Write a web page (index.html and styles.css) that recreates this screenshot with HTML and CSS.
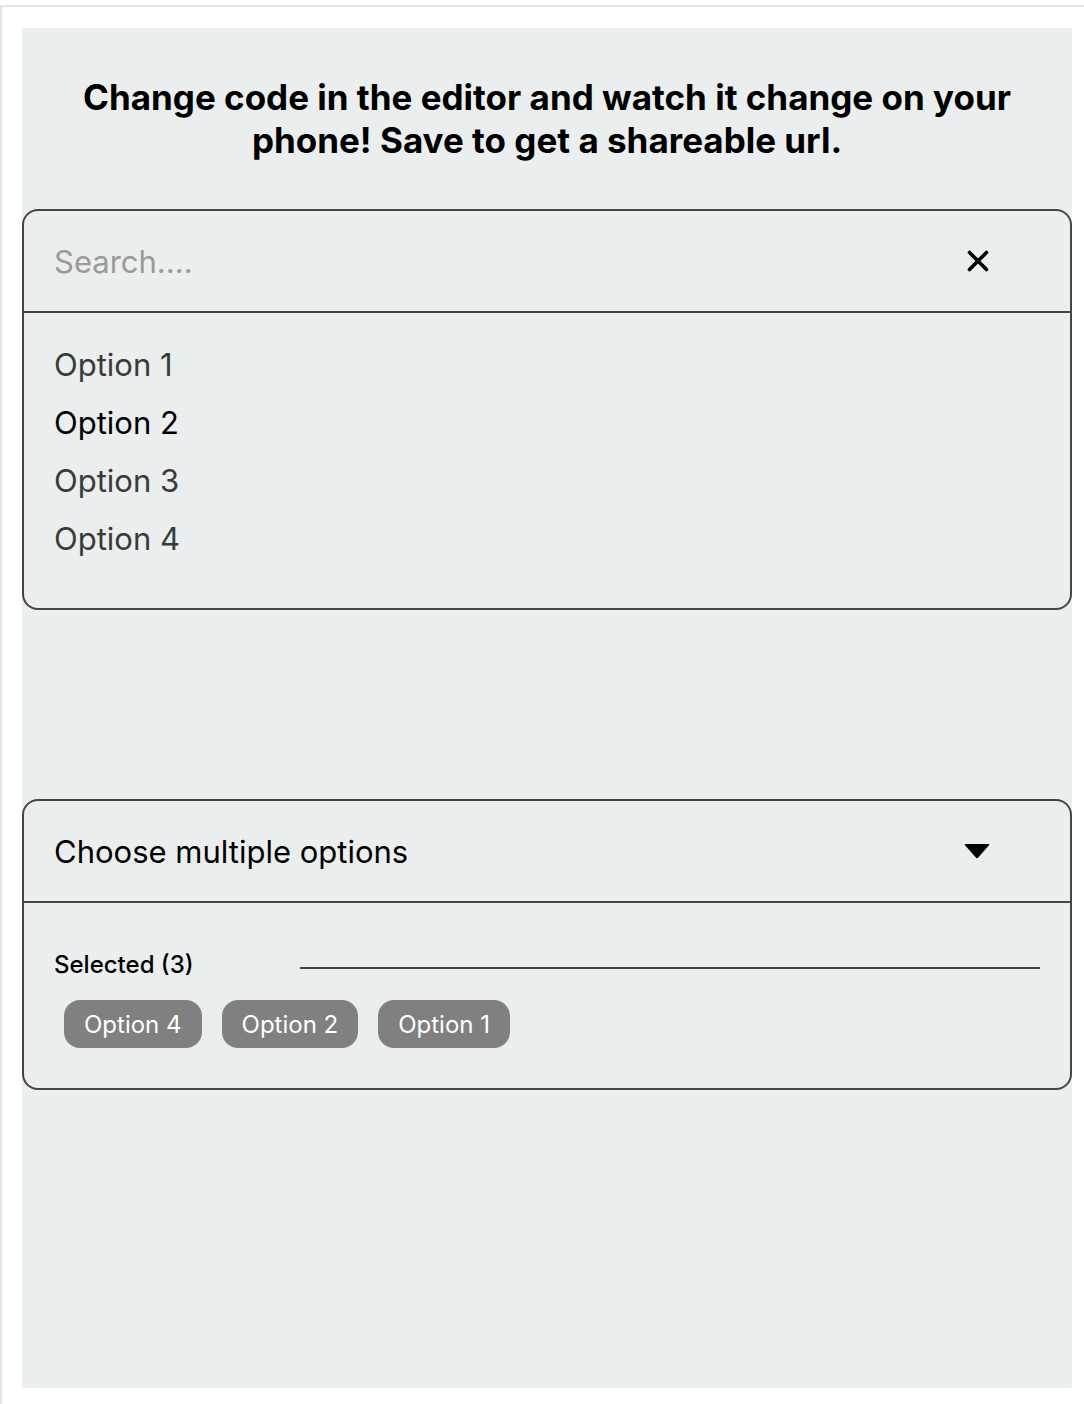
FILE: index.html
```html
<!DOCTYPE html>
<html lang="en">
<head>
<meta charset="utf-8">
<title>Select demo</title>
<link rel="stylesheet" href="styles.css">
</head>
<body>
<div class="frame">
  <div class="shell">
    <main class="panel">
      <h1 class="intro">Change code in the editor and watch it change on your phone! Save to get a shareable url.</h1>

      <section class="card search-card">
        <div class="card-head">
          <span class="placeholder">Search....</span>
          <svg class="icon-x" width="24" height="24" viewBox="0 0 24 24" aria-hidden="true">
            <path d="M3.5 3.5 L20.5 20.5 M20.5 3.5 L3.5 20.5" stroke="#000" stroke-width="3.6" stroke-linecap="round" fill="none"/>
          </svg>
        </div>
        <ul class="options">
          <li class="option">Option 1</li>
          <li class="option active">Option 2</li>
          <li class="option">Option 3</li>
          <li class="option">Option 4</li>
        </ul>
      </section>

      <section class="card multi-card">
        <div class="card-head">
          <span class="title">Choose multiple options</span>
          <svg class="icon-caret" width="28" height="18" viewBox="0 0 28 18" aria-hidden="true">
            <path d="M2.5 2 L25.5 2 Q27 2 26 3.2 L15.2 15.6 Q14 17 12.8 15.6 L2 3.2 Q1 2 2.5 2 Z" fill="#000"/>
          </svg>
        </div>
        <div class="selected">
          <div class="selected-row">
            <span class="selected-label">Selected (3)</span>
            <span class="selected-rule"></span>
          </div>
          <div class="chips">
            <span class="chip">Option 4</span>
            <span class="chip">Option 2</span>
            <span class="chip">Option 1</span>
          </div>
        </div>
      </section>
    </main>
  </div>
</div>
</body>
</html>
```

FILE: styles.css
```css
html, body {
  margin: 0;
  padding: 0;
  background: #ffffff;
}

body {
  font-family: Inter, "Noto Sans", "Liberation Sans", sans-serif;
  color: #000;
}

.frame {
  margin-top: 5px;
  border-top: 2px solid #e2e6ea;
}

.shell {
  border-left: 2px solid #e2e6ea;
  margin-left: 0;
  padding: 21px 0 16px 20px;
}

.panel {
  width: 1050px;
  height: 1360px;
  box-sizing: border-box;
  background: #ebeeef;
  padding-top: 48px;
}

.intro {
  margin: 0 30px 47px;
  font-size: 35px;
  line-height: 43px;
  font-weight: 700;
  text-align: center;
}

.card {
  border: 2px solid #454545;
  border-radius: 16px;
  box-sizing: border-box;
}

.card-head {
  height: 102px;
  box-sizing: border-box;
  border-bottom: 2px solid #454545;
  display: flex;
  align-items: center;
  justify-content: space-between;
  padding: 0 81px 0 30px;
}

.placeholder {
  font-size: 31px;
  color: #9a9a9a;
}

.title {
  font-size: 31px;
  color: #000;
}

.icon-x {
  display: block;
  width: 24px;
  height: 24px;
  margin-right: -1px;
}

.icon-caret {
  display: block;
  width: 28px;
  height: 18px;
  margin-right: -2px;
}

.options {
  list-style: none;
  margin: 0;
  padding: 23px 30px 40px;
}

.option {
  font-size: 31px;
  line-height: 58px;
  color: #3a3a3a;
}

.option.active {
  color: #000;
}

.multi-card {
  margin-top: 189px;
}

.selected {
  padding: 40px 30px 40px;
}

.selected-row {
  display: flex;
  align-items: center;
  height: 44px;
  margin-top: -1px;
}

.selected-label {
  width: 246px;
  font-size: 24px;
  font-weight: 500;
  color: #000;
}

.selected-rule {
  flex: 1;
  height: 2px;
  background: #454545;
  margin-top: 8px;
}

.chips {
  display: flex;
  gap: 20px;
  margin-top: 14px;
  padding-left: 10px;
}

.chip {
  height: 48px;
  box-sizing: border-box;
  padding: 0 20px;
  border-radius: 16px;
  background: #808080;
  color: #fff;
  font-size: 24px;
  display: flex;
  align-items: center;
}
```
